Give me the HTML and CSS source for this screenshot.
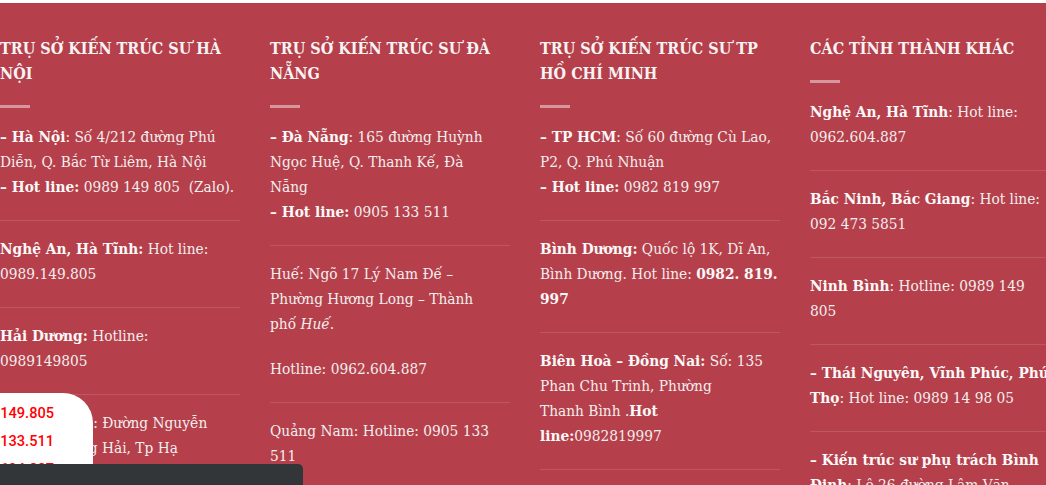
FILE: index.html
```html
<!DOCTYPE html>
<html lang="vi">
<head>
<meta charset="utf-8">
<title>Liên hệ</title>
<link rel="stylesheet" href="styles.css">
</head>
<body>
<footer class="footer">
  <div class="cols">
    <section class="col">
      <h3 class="col-title">TRỤ SỞ KIẾN TRÚC SƯ HÀ<br>NỘI</h3>
      <div class="bar"></div>
      <div class="item">
        <p><strong>– Hà Nội</strong>: Số 4/212 đường Phú<br>Diễn, Q. Bắc Từ Liêm, Hà Nội<br><strong>– Hot line:</strong> 0989 149 805&nbsp; (Zalo).</p>
      </div>
      <div class="item">
        <p><strong>Nghệ An, Hà Tĩnh:</strong> Hot line:<br>0989.149.805</p>
      </div>
      <div class="item">
        <p><strong>Hải Dương:</strong> Hotline:<br>0989149805</p>
      </div>
      <div class="item">
        <p><strong>Quảng Ninh</strong>: Đường Nguyễn<br>Văn Cừ, Hồng Hải, Tp Hạ<br>Long</p>
      </div>
    </section>
    <section class="col">
      <h3 class="col-title">TRỤ SỞ KIẾN TRÚC SƯ ĐÀ<br>NẴNG</h3>
      <div class="bar"></div>
      <div class="item">
        <p><strong>– Đà Nẵng</strong>: 165 đường Huỳnh<br>Ngọc Huệ, Q. Thanh Kế, Đà<br>Nẵng<br><strong>– Hot line:</strong> 0905 133 511</p>
      </div>
      <div class="item">
        <p>Huế: Ngõ 17 Lý Nam Đế –<br>Phường Hương Long – Thành<br>phố <em>Huế</em>.</p>
        <p>Hotline: 0962.604.887</p>
      </div>
      <div class="item">
        <p>Quảng Nam: Hotline: 0905 133<br>511</p>
      </div>
    </section>
    <section class="col">
      <h3 class="col-title">TRỤ SỞ KIẾN TRÚC SƯ TP<br>HỒ CHÍ MINH</h3>
      <div class="bar"></div>
      <div class="item">
        <p><strong>– TP HCM</strong>: Số 60 đường Cù Lao,<br>P2, Q. Phú Nhuận<br><strong>– Hot line:</strong> 0982 819 997</p>
      </div>
      <div class="item">
        <p><strong>Bình Dương:</strong> Quốc lộ 1K, Dĩ An,<br>Bình Dương. Hot line: <strong>0982. 819.<br>997</strong></p>
      </div>
      <div class="item">
        <p><strong>Biên Hoà – Đồng Nai:</strong> Số: 135<br>Phan Chu Trinh, Phường<br>Thanh Bình .<strong>Hot<br>line:</strong>0982819997</p>
      </div>
      <div class="item">
        <p><strong>Vũng Tàu:</strong> Hot line:<br>0982 819 997</p>
      </div>
    </section>
    <section class="col">
      <h3 class="col-title">CÁC TỈNH THÀNH KHÁC</h3>
      <div class="bar"></div>
      <div class="item">
        <p><strong>Nghệ An, Hà Tĩnh</strong>: Hot line:<br>0962.604.887</p>
      </div>
      <div class="item">
        <p><strong>Bắc Ninh, Bắc Giang</strong>: Hot line:<br>092 473 5851</p>
      </div>
      <div class="item">
        <p><strong>Ninh Bình</strong>: Hotline: 0989 149<br>805</p>
      </div>
      <div class="item">
        <p><strong>– Thái Nguyên, Vĩnh Phúc, Phú<br>Thọ</strong>: Hot line: 0989 14 98 05</p>
      </div>
      <div class="item">
        <p><strong>– Kiến trúc sư phụ trách Bình<br>Định</strong>: Lô 26 đường Lâm Văn<br>Thạnh</p>
      </div>
    </section>
  </div>
</footer>

<aside class="call-box">
  <div class="call-line">0989.149.805</div>
  <div class="call-line">0905.133.511</div>
  <div class="call-line">0962.604.887</div>
</aside>
<div class="bottom-bar"></div>
</body>
</html>
```
FILE: styles.css
```css
html, body {
  margin: 0;
  padding: 0;
  background: #ffffff;
  overflow: hidden;
}

.footer {
  margin-top: 3px;
  background: #b5404b;
  color: #f3eeee;
  font-family: "DejaVu Serif Condensed", "DejaVu Serif", serif;
  font-size: 15.3px;
  line-height: 25px;
  padding-top: 33px;
  min-height: 600px;
}

.cols {
  display: grid;
  grid-template-columns: repeat(4, 240px);
  column-gap: 30px;
  width: 1050px;
}

.col-title {
  margin: 0;
  font-size: 16px;
  line-height: 25px;
  font-weight: 700;
  color: #f7f3f3;
  white-space: nowrap;
}

.bar {
  width: 30px;
  height: 3px;
  background: rgba(255, 255, 255, 0.45);
  margin: 19px 0 17px;
}

.item {
  border-bottom: 1px solid rgba(255, 255, 255, 0.12);
  padding-top: 16px;
}

.bar + .item {
  padding-top: 0;
}

.item p {
  margin: 0 0 20px;
  white-space: nowrap;
}

.item strong {
  font-weight: 700;
  color: #fbf8f8;
}

.call-box {
  position: fixed;
  left: -37px;
  top: 393px;
  width: 130px;
  height: 100px;
  background: #ffffff;
  border-radius: 0 30px 0 0;
  box-sizing: border-box;
  padding-top: 6px;
  font-family: Roboto, "Liberation Sans", sans-serif;
  font-size: 14.6px;
  font-weight: 500;
  line-height: 28px;
  color: #ff0000;
  z-index: 5;
}

.bottom-bar {
  position: fixed;
  left: 0;
  bottom: 0;
  width: 303px;
  height: 21px;
  background: #323639;
  border-radius: 0 5px 0 0;
  z-index: 6;
}
```
